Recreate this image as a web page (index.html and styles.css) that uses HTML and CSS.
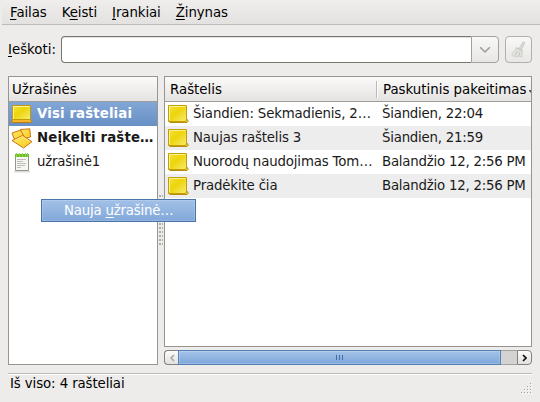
FILE: index.html
```
<!DOCTYPE html>
<html lang="lt">
<head>
<meta charset="utf-8">
<title>Rašteliai</title>
<link rel="stylesheet" href="styles.css">
</head>
<body>
<svg class="defs" width="0" height="0" aria-hidden="true">
  <defs>
    <linearGradient id="gold" x1="0" y1="0" x2="1" y2="1">
      <stop offset="0" stop-color="#f3e33c"/><stop offset=".45" stop-color="#ecd50c"/><stop offset="1" stop-color="#f8ec70"/>
    </linearGradient>
    <linearGradient id="amber" x1="0" y1="0" x2="1" y2="1">
      <stop offset="0" stop-color="#ffe870"/><stop offset="1" stop-color="#f7cb10"/>
    </linearGradient>
    <symbol id="note" viewBox="0 0 22 20">
      <path d="M2.500 18.500h17.500l1.300-1.300-1.800-2.700" fill="#e8c93a" stroke="#b98f08"/>
      <path d="M1.500 1.500h18v13.500q-.2 2.500-1.500 2.500H1.500z" fill="url(#gold)" stroke="#c59d08"/>
      <path d="M2.500 16V2.500h16" fill="none" stroke="#faf08c"/>
    </symbol>
  </defs>
</svg>
<div class="window">
  <nav class="menubar">
    <span><u>F</u>ailas</span><span>K<u>e</u>isti</span><span><u>Į</u>rankiai</span><span><u>Ž</u>inynas</span>
  </nav>
  <div class="search">
    <label><u>I</u>eškoti:</label>
    <div class="combo">
      <div class="entry"></div>
      <div class="drop"><svg width="12" height="8" viewBox="0 0 12 8"><path d="M1.200 1.200 6 6l4.800-4.800" fill="none" stroke="#9a9a96" stroke-width="1.500"/></svg></div>
    </div>
    <div class="clear">
      <svg width="20" height="20" viewBox="0 0 20 20">
        <path d="M14 2q1.800-.6 1.800 1.100L12.500 9.500l-2.500-1z" fill="#d9d9d6" stroke="#c8c8c4" stroke-width=".8"/>
        <path d="M7.500 7.500 13.500 10.500l-.5 6.500-3-.8-1.500 1-2.500-1.200-1.500.5-2-2.500q3-2 5-6.500z" fill="#e1e1dd" stroke="#c9c9c4" stroke-width=".8"/>
        <path d="M7.500 8 13 10.800M8.500 11 6.500 15M11 12l-1 4" fill="none" stroke="#c2c2bd" stroke-width=".8"/>
      </svg>
    </div>
  </div>
  <div class="panes">
    <section class="panel books">
      <div class="head">Užrašinės</div>
      <div class="row selected">
        <svg class="icon" width="22" height="20" viewBox="0 0 22 20">
          <path d="M1.500 15.500h18l1.300 2-1.300 1H2l-1.500-1z" fill="#efb62c" stroke="#c17a0c"/>
          <path d="M1.500 1.500h18v14h-18z" fill="url(#gold)" stroke="#c49a08"/>
          <path d="M2.500 15V2.500h16" fill="none" stroke="#fbf29b"/>
        </svg><span>Visi rašteliai</span>
      </div>
      <div class="row bold">
        <svg class="icon" width="22" height="22" viewBox="0 0 22 22">
          <path d="M9.500 2.500 18.800 1.800l.7 8.200-8 2z" fill="url(#amber)" stroke="#d0741a"/>
          <path d="M1 6 9.500 3l4.500 8L4 14z" fill="url(#amber)" stroke="#d0741a"/>
          <path d="M1 13.500 11.500 8.500l9.500 6.200-8.500 6.300z" fill="url(#amber)" stroke="#d0741a"/>
          <path d="m3.500 13.500 8-4 7 5" fill="none" stroke="#fff09a" stroke-width=".8"/>
        </svg><span>Neįkelti rašte…</span>
      </div>
      <div class="row">
        <svg class="icon" width="22" height="22" viewBox="0 0 22 22">
          <path d="M3 20.800h16" stroke="#c9c9c5"/>
          <path d="M4.500 4.500h13v15h-13z" fill="#f5f5f2" stroke="#969691"/>
          <path d="M4 3h14v3H4z" fill="#6cbd26"/>
          <path d="M5.500 2v4M8.500 2v4M11.500 2v4M14.500 2v4M16.500 2v4" stroke="#8fd04c"/>
          <path d="M6 8.500h9M6 10.500h6M6 12.500h9M6 14.500h8M6 16.500h4" stroke="#bdbdb9"/>
        </svg><span>užrašinė1</span>
      </div>
    </section>
    <div class="splitter"><i></i></div>
    <div class="notes-side">
      <section class="panel notes">
        <div class="head cols"><span>Raštelis</span><span class="date">Paskutinis pakeitimas</span><svg class="sort" width="7" height="5" viewBox="0 0 7 5"><path d="M0 1h7v1L4 5H3L0 2z" fill="#555"/></svg></div>
        <div class="row cols"><span class="name"><svg class="icon" width="22" height="20"><use href="#note"/></svg>Šiandien: Sekmadienis, 2…</span><span class="date">Šiandien, 22:04</span></div>
        <div class="row cols alt"><span class="name"><svg class="icon" width="22" height="20"><use href="#note"/></svg>Naujas raštelis 3</span><span class="date">Šiandien, 21:59</span></div>
        <div class="row cols"><span class="name"><svg class="icon" width="22" height="20"><use href="#note"/></svg>Nuorodų naudojimas Tom…</span><span class="date">Balandžio 12, 2:56 PM</span></div>
        <div class="row cols alt"><span class="name"><svg class="icon" width="22" height="20"><use href="#note"/></svg>Pradėkite čia</span><span class="date">Balandžio 12, 2:56 PM</span></div>
      </section>
      <div class="scrollbar">
        <div class="step left"><svg width="5" height="8" viewBox="0 0 5 8"><path d="M4 1 1 4l3 3" fill="none" stroke="#a5a5a1" stroke-width="1.500"/></svg></div>
        <div class="thumb"><i></i><i></i><i></i></div>
        <div class="trough"></div>
        <div class="step right"><svg width="5" height="8" viewBox="0 0 5 8"><path d="m1 1 3 3-3 3" fill="none" stroke="#111" stroke-width="1.700"/></svg></div>
      </div>
    </div>
  </div>
  <footer class="status"><span>Iš viso: 4 rašteliai</span>
    <svg class="grip" width="12" height="12" viewBox="0 0 12 12"><path d="M10 1.500h1M7 4.500h1m2 0h1M4 7.500h1m2 0h1m2 0h1M1 10.500h1m2 0h1m2 0h1m2 0h1" stroke="#a3a3a0"/><path d="M11 2.500h1M8 5.500h1m2 0h1M5 8.500h1m2 0h1m2 0h1M2 11.500h1m2 0h1m2 0h1m2 0h1" stroke="#fff"/></svg>
  </footer>
  <div class="popup">Nauja <u>u</u>žrašinė…</div>
</div>
</body>
</html>
```
FILE: styles.css
```
* { box-sizing: border-box; }
body {
  margin: 0;
  background: #edeceb;
  color: #000;
  font: 13.33px/24px "DejaVu Sans", sans-serif;
  white-space: nowrap;
}
svg { display: block; flex: none; }
.defs { position: absolute; }
u { text-underline-offset: 2px; text-decoration-thickness: 1px; text-decoration-skip-ink: none; }
.window { position: relative; width: 540px; height: 402px; overflow: hidden; }
.menubar {
  display: flex;
  gap: 15px;
  height: 25px;
  margin-left: 2px;
  padding-left: 8px;
  background: linear-gradient(#efeeed, #e4e2e0);
  border-bottom: 1px solid #bdbbb8;
  line-height: 26px;
  letter-spacing: -.08px;
}
.search { display: flex; margin: 11px 8px 0 8px; height: 27px; }
.search label { width: 53px; line-height: 28px; }
.combo { display: flex; width: 438px; }
.entry {
  flex: 1;
  background: #fff;
  border: 1px solid #777772;
  border-right: 0;
  border-radius: 4px 0 0 4px;
  box-shadow: inset 0 1px #e2e2e0;
}
.drop, .clear {
  display: flex;
  align-items: center;
  justify-content: center;
  width: 28px;
  border: 1px solid #a3a19d;
  border-radius: 0 4px 4px 0;
  background: linear-gradient(#f8f8f7, #e8e7e5);
}
.clear { width: 27px; margin-left: 6px; border-radius: 4px; border-color: #b1afab; }
.panes { display: flex; height: 289px; margin: 13px 8px 0; }
.panel { border: 1px solid #979590; background: #fff; overflow: hidden; }
.books { width: 150px; }
.splitter { width: 6px; padding: 119px 1px 0; }
.splitter i {
  display: block;
  height: 50px;
  background: radial-gradient(circle at 1px 1px, #a8a8a5 .7px, transparent .8px) 0 0 / 3px 4px;
}
.notes-side { width: 368px; }
.notes { height: 271px; }
.head {
  height: 25px;
  padding-left: 3px;
  border-bottom: 1px solid #a09e9a;
  background: linear-gradient(#fafaf9, #e5e3e1);
  line-height: 26px;
}
.row { display: flex; height: 24px; padding-left: 2px; color: #1a1a1a; }
.icon { margin: 2px 4px 0 0; }
.books .icon { margin-top: 1px; }
.row.selected .icon { margin-top: 2px; }
.selected, .bold { font-weight: bold; letter-spacing: .12px; }
.row.selected { color: #fff; background: linear-gradient(#82a6d6, #6890c5); }
.books .row:last-child { letter-spacing: -.2px; }
.alt { background: #ededed; }
.cols { display: grid; grid-template-columns: 211px auto 1fr; padding-left: 0; }
.cols > :first-child { padding-left: 5px; }
.row .name { display: flex; padding-left: 2px !important; letter-spacing: -.15px; }
.row .date { padding-left: 6px; letter-spacing: -.23px; }
.head .date { position: relative; padding-left: 7px; }
.head .date::before {
  content: "";
  position: absolute;
  left: 0;
  top: 4px;
  width: 1px;
  height: 17px;
  background: #bbb9b5;
  box-shadow: 1px 0 #fff;
}
.sort { margin: 12px 0 0 3px; }
.scrollbar { display: flex; height: 15px; margin-top: 3px; }
.step {
  display: flex;
  align-items: center;
  justify-content: center;
  width: 15px;
  border: 1px solid #83817e;
  background: linear-gradient(#fbfbfa, #e2e1df);
}
.left { border-radius: 4px 0 0 4px; border-right: 0; }
.right { border-radius: 0 4px 4px 0; }
.thumb {
  display: flex;
  align-items: center;
  justify-content: center;
  gap: 2px;
  width: 323px;
  margin-left: -1px;
  border: 1px solid #5680b4;
  background: linear-gradient(#a4c3e9, #7ea6d9);
  box-shadow: inset 0 0 0 1px #ffffff33;
}
.thumb i { width: 1px; height: 5px; background: #416da5; }
.trough { flex: 1; border: solid #a3a19d; border-width: 1px 0; background: #d5d3d1; }
.status {
  display: flex;
  justify-content: space-between;
  margin: 8px 8px 0;
  padding-left: 2px;
  border-top: 1px solid #bdbbb8;
  box-shadow: inset 0 1px #fff;
  line-height: 19px;
  height: 28px;
  letter-spacing: -.1px;
}
.grip { margin: 8px 0 0; }
.popup {
  position: absolute;
  left: 41px;
  top: 199px;
  width: 155px;
  height: 23px;
  padding-left: 22px;
  border: 1px solid #4b74a8;
  background: linear-gradient(#a3c1e7, #81a8da);
  box-shadow: inset 0 0 0 1px #ffffff26;
  color: #fff;
  line-height: 21px;
  letter-spacing: -.2px;
}
```
